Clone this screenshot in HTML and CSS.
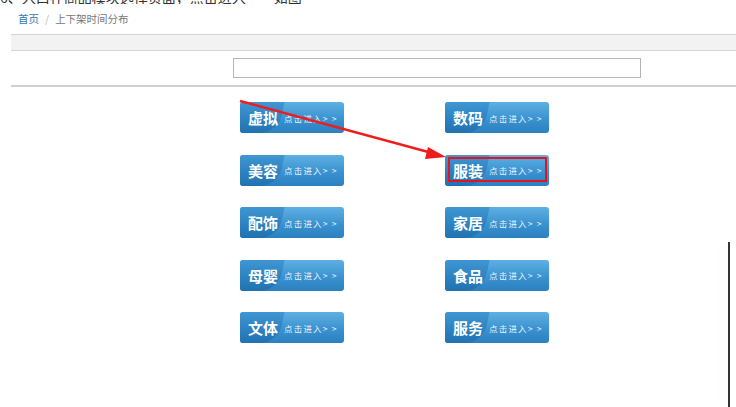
FILE: index.html
```html
<!DOCTYPE html>
<html lang="zh">
<head>
<meta charset="utf-8">
<link rel="stylesheet" href="styles.css">
</head>
<body>
<div class="page">
  <div class="cut-wrap"><div class="cut-title">6、入口在商品模块选择页面，点击进入——如图</div></div>
  <div class="crumb"><a class="crumb-home">首页</a><span class="crumb-sep">/</span><span class="crumb-cur">上下架时间分布</span></div>
  <div class="panel">
    <div class="bar"></div>
    <div class="search-row"><div class="search-box"></div></div>
    <div class="rule"></div>
    <div class="grid">
      <a class="btn"><span class="big">虚拟</span><span class="small">点击进入&gt; &gt;</span></a>
      <a class="btn"><span class="big">数码</span><span class="small">点击进入&gt; &gt;</span></a>
      <a class="btn"><span class="big">美容</span><span class="small">点击进入&gt; &gt;</span></a>
      <a class="btn marked"><span class="big">服装</span><span class="small">点击进入&gt; &gt;</span></a>
      <a class="btn"><span class="big">配饰</span><span class="small">点击进入&gt; &gt;</span></a>
      <a class="btn"><span class="big">家居</span><span class="small">点击进入&gt; &gt;</span></a>
      <a class="btn"><span class="big">母婴</span><span class="small">点击进入&gt; &gt;</span></a>
      <a class="btn"><span class="big">食品</span><span class="small">点击进入&gt; &gt;</span></a>
      <a class="btn"><span class="big">文体</span><span class="small">点击进入&gt; &gt;</span></a>
      <a class="btn"><span class="big">服务</span><span class="small">点击进入&gt; &gt;</span></a>
    </div>
  </div>
  <svg class="arrow" width="736" height="407" viewBox="0 0 736 407">
    <line x1="240" y1="101" x2="432" y2="153" stroke="#f01c1c" stroke-width="2.4"/>
    <polygon points="446,157 428,147 425,159" fill="#f01c1c"/>
  </svg>
  <div class="edge"></div>
</div>
</body>
</html>
```
FILE: styles.css
```css
html, body { margin: 0; padding: 0; background: #fff; }
body { font-family: "Microsoft YaHei", "Noto Sans CJK SC", "Liberation Sans", sans-serif; }
.page { position: relative; width: 736px; height: 407px; overflow: hidden; }
.cut-wrap { height: 4px; overflow: hidden; }
.cut-title { font-size: 14px; line-height: 14px; margin-top: -10px; color: #333; white-space: nowrap; }
.crumb { margin-top: 8px; padding-left: 18px; font-size: 10.5px; line-height: 14px; height: 14px; color: #777; }
.crumb-home { color: #337ab7; }
.crumb-sep { color: #bbb; margin: 0 6px; }
.panel { margin-left: 11px; margin-top: 8px; }
.bar { height: 15px; background: #f2f2f2; border-top: 1px solid #d4d4d4; border-bottom: 1px solid #d4d4d4; }
.search-row { padding: 7px 0 0 222px; height: 21px; }
.search-box { width: 406px; height: 18px; border: 1px solid #b4b4b4; background: #fff; }
.rule { margin-top: 6px; height: 2px; background: #d0d0d0; }
.grid { display: grid; grid-template-columns: 104px 104px; column-gap: 101px; row-gap: 21.5px; padding: 15px 0 0 229px; }
.btn { position: relative; display: flex; align-items: center; height: 31px; border-radius: 3px; overflow: hidden; background: linear-gradient(#5eb0e2, #3a92d0 55%, #2c80c0); color: #fff; text-decoration: none; }
.btn::before { content: ""; position: absolute; left: -10px; top: 0; width: 48px; height: 31px; background: linear-gradient(#3a92d0, #1f6fae); border-radius: 0 0 18px 0; transform: skewX(-12deg); transform-origin: bottom left; opacity: 0.85; }
.big { position: relative; flex: none; font-size: 15px; font-weight: bold; margin-left: 8px; width: 36px; }
.small { position: relative; flex: none; font-size: 8.5px; color: #eaf4fb; letter-spacing: 1.2px; white-space: nowrap; }
.marked::after { content: ""; position: absolute; left: 3px; top: 2px; right: 2px; bottom: 4px; border: 2px solid #e4141c; }
.arrow { position: absolute; left: 0; top: 0; pointer-events: none; }
.edge { position: absolute; left: 728px; top: 242px; width: 2px; height: 165px; background: #333; box-shadow: -6px 0 8px rgba(0,0,0,0.04); }
```
